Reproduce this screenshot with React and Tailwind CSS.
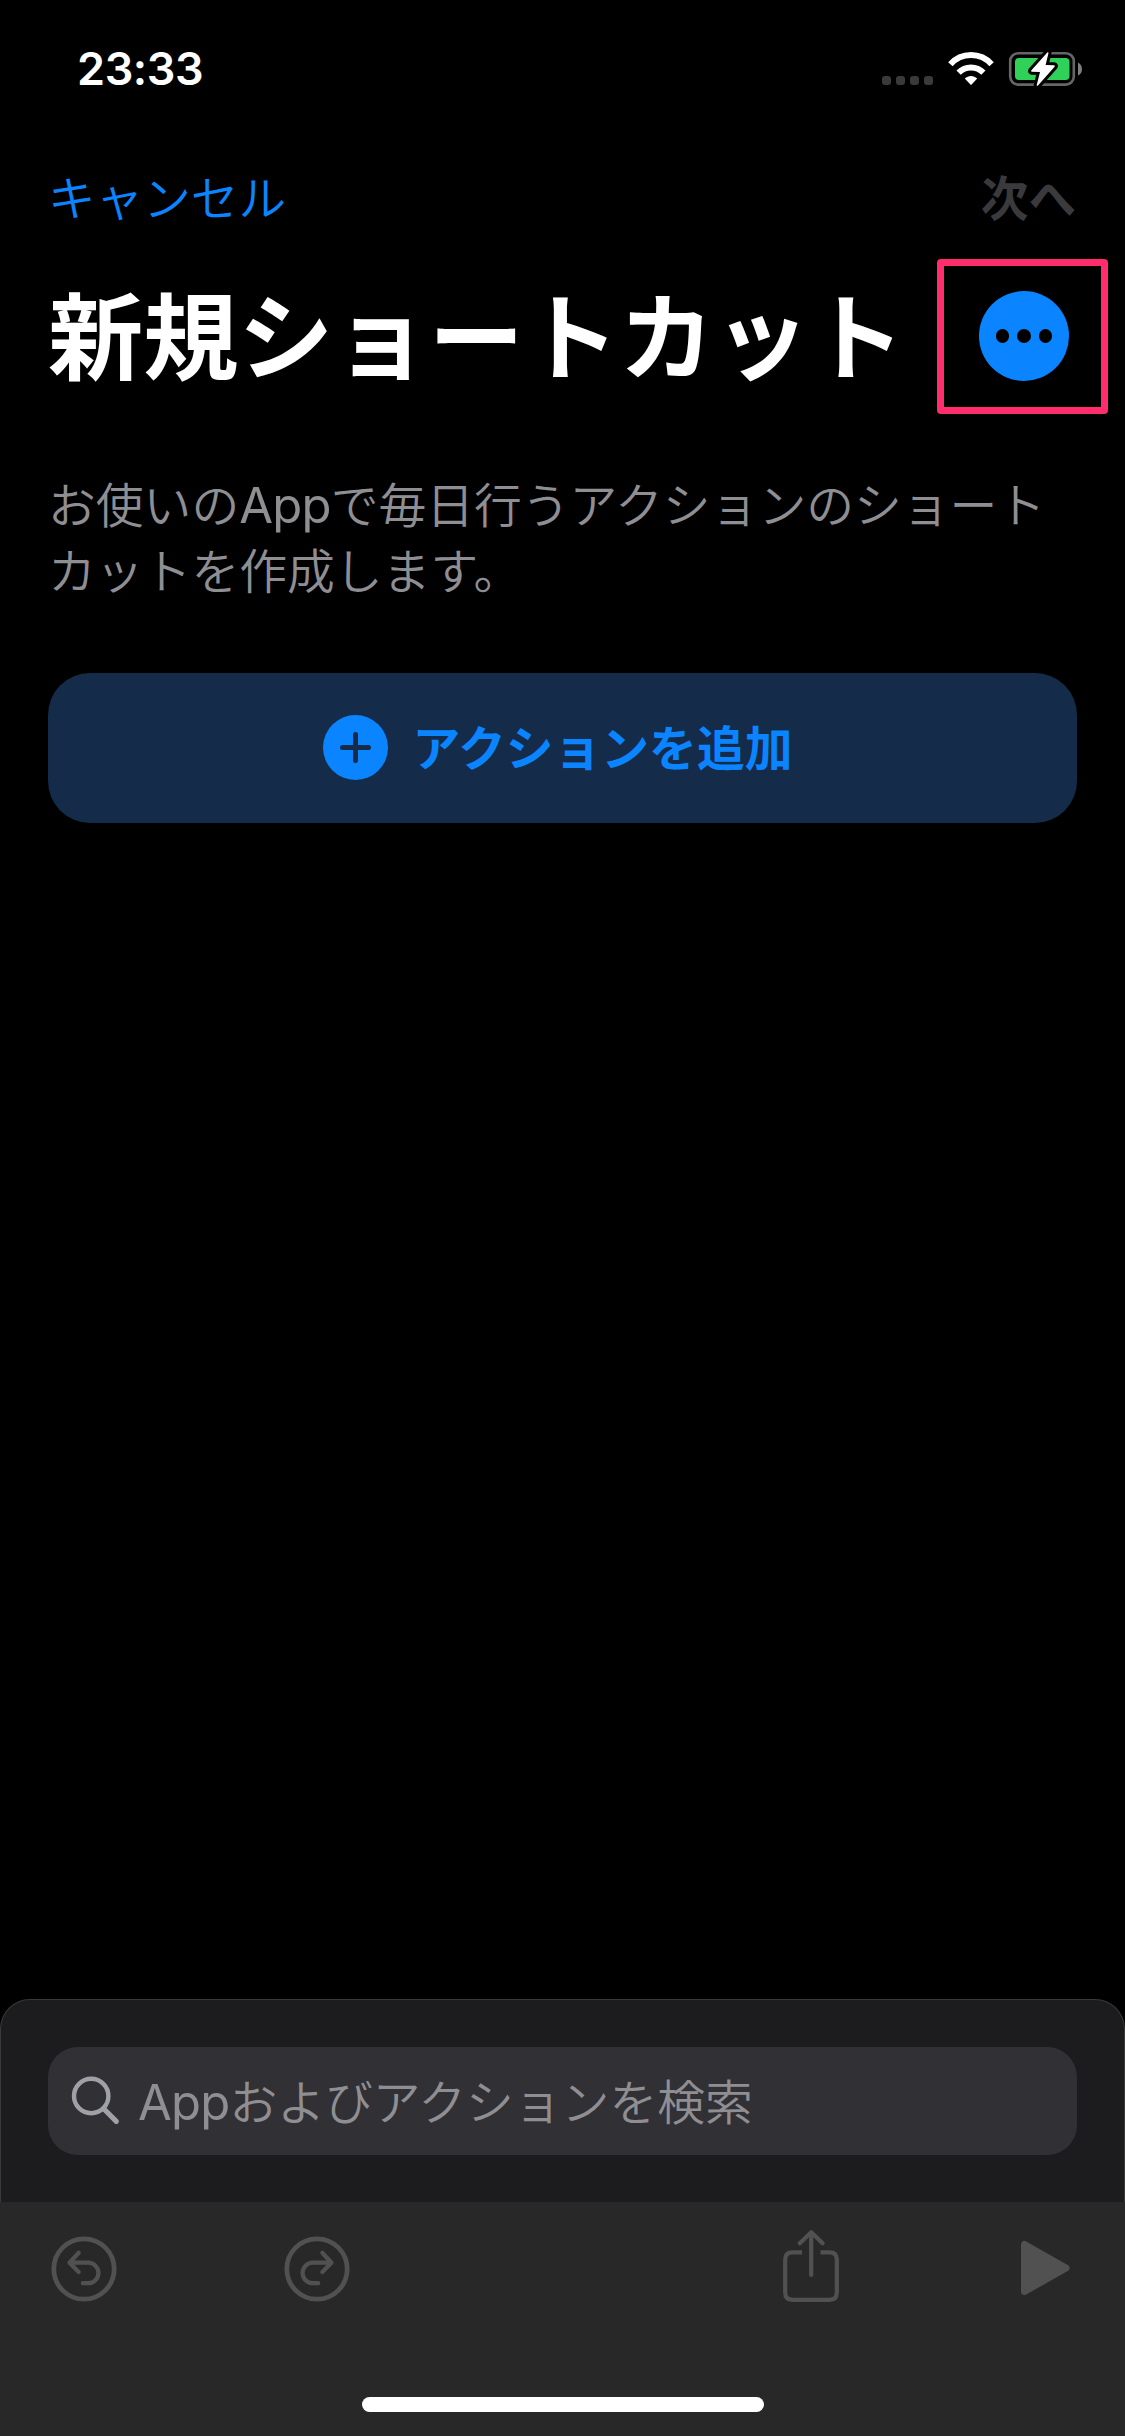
import React from "react";

function StatusIcons() {
  return (
    <svg width="204" height="40" viewBox="880 49 204 40" fill="none">
      <g fill="#3a3a3a">
        <rect x="882" y="76" width="9" height="9" rx="3" />
        <rect x="896" y="76" width="9" height="9" rx="3" />
        <rect x="910" y="76" width="9" height="9" rx="3" />
        <rect x="924" y="76" width="9" height="9" rx="3" />
      </g>
      <g stroke="#fff" strokeWidth="6">
        <path d="M950.4 64.3A27.6 27.6 0 0 1 991.6 64.3" />
        <path d="M958.6 72.6A17.4 17.4 0 0 1 983.4 72.6" />
      </g>
      <path d="M964.8 78.6C968.3 75 973.7 75 977.2 78.6L971.6 84.6Q971 85.2 970.4 84.6Z" fill="#fff" />
      <rect x="1010.2" y="53.2" width="63.6" height="31.4" rx="8" stroke="#666" strokeWidth="2.6" />
      <path d="M1078 62.5C1083.3 65 1083.3 73.500 1078 75.500Z" fill="#808080" />
      <rect x="1015" y="58" width="54.500" height="22" rx="4" fill="#30d158" />
      <path
        d="M1047.300 52.500L1031.200 70.500Q1030.700 71.500 1031.800 71.700L1040 72L1036.700 85.200Q1037 86.200 1038 85.500L1054.600 66.700Q1055.500 65.400 1054 65.200L1045.600 65L1048.500 53Q1048.300 51.800 1047.300 52.500Z"
        fill="#fff"
        stroke="#000"
        strokeWidth="6"
        strokeLinejoin="round"
        paintOrder="stroke"
      />
    </svg>
  );
}

function UndoIcon({ className }) {
  return (
    <svg className={className} width="66" height="66" viewBox="-33 -33 66 66" fill="none" stroke="#515151" strokeLinecap="round" strokeLinejoin="round">
      <circle r="30.200" strokeWidth="4.700" />
      <path d="M-5.300 -16.200L-14.500 -6.300L-5.300 3M-14.300 -6.300H4.200A10.200 10.200 0 0 1 4.200 14.200H-1.200" strokeWidth="4.200" />
    </svg>
  );
}

function ShareIcon() {
  return (
    <svg width="56" height="74" viewBox="783 2229 56 74" fill="none" stroke="#515151" strokeWidth="4.200">
      <path d="M802 2252.300H792.500Q785.200 2252.300 785.200 2259.500V2292.500Q785.200 2299.800 792.500 2299.800H829.500Q836.800 2299.800 836.800 2292.500V2259.500Q836.800 2252.300 829.500 2252.300H820.500" />
      <path d="M799.800 2243.300L811.200 2232.200L822.600 2243.300M811.200 2232.500V2275" strokeLinecap="round" strokeLinejoin="round" />
    </svg>
  );
}

function PlayIcon() {
  return (
    <svg width="49" height="56" viewBox="0 0 49 56" fill="#515151" stroke="#515151" strokeWidth="7" strokeLinejoin="round">
      <path d="M3.500 4.500V51.500L45 28Z" />
    </svg>
  );
}

export default function App() {
  return (
    <div
      lang="ja"
      className="flex h-[2436px] w-[1125px] flex-col overflow-hidden bg-black whitespace-nowrap text-white [font-family:'Noto_Sans_CJK_JP',sans-serif]"
    >
      <header className="flex h-[132px] shrink-0 items-start justify-between pt-[49px] pr-[41px] pl-[77px]">
        <time className="text-[45px] leading-[40px] font-semibold tracking-[-0.4px] [font-family:Inter,sans-serif]">23:33</time>
        <StatusIcons />
      </header>

      <nav className="flex h-[127px] shrink-0 items-center justify-between pr-[49px] pl-[48px] text-[47.600px] leading-[60px]">
        <button className="font-[350] text-[#0a84ff]">キャンセル</button>
        <button className="font-bold text-[#3a3a3c]">次へ</button>
      </nav>

      <div className="flex h-[155px] shrink-0 items-center justify-between pr-[17px] pl-[48px]">
        <h1 className="pb-[10px] text-[95.200px] leading-[110px] font-bold">新規ショートカット</h1>
        <div className="flex h-[155px] w-[171px] items-center justify-center rounded-[4px] border-[7px] border-[#ff2d6b] pl-[3px]">
          <button className="mb-[1px] flex size-[90px] items-center justify-center gap-[8px] rounded-full bg-[#0a84ff]">
            <span className="size-[13.400px] rounded-full bg-black" />
            <span className="size-[13.400px] rounded-full bg-black" />
            <span className="size-[13.400px] rounded-full bg-black" />
          </button>
        </div>
      </div>

      <main className="flex flex-1 flex-col px-[48px] pt-[56px]">
        <p className="text-[47.800px] leading-[66px] font-[350] text-[#8e8e93]">
          お使いの<span className="text-[49px] leading-none font-normal tracking-[-0.8px] [font-family:Inter,sans-serif]">App</span>で毎日行うアクションのショート
          <br />
          カットを作成します。
        </p>
        <button className="mt-[71px] flex h-[150px] items-center justify-center gap-[25px] rounded-[42px] bg-[#142c49] pr-[10px] text-[#0a84ff]">
          <svg className="mb-[1px]" width="65" height="65" viewBox="0 0 65 65">
            <circle cx="32.500" cy="32.500" r="32.500" fill="#0a84ff" />
            <path d="M32.500 19.500V45.500M19.500 32.500H45.500" stroke="#142c49" strokeWidth="5" strokeLinecap="round" />
          </svg>
          <span className="pb-[4px] text-[47.800px] leading-[60px] font-bold">アクションを追加</span>
        </button>
      </main>

      <section className="h-[203px] shrink-0 rounded-t-[30px] border border-b-0 border-[#3a3a3a] bg-[#1c1c1e] px-[47px] pt-[47px]">
        <div className="flex h-[108px] items-center gap-[16px] rounded-[30px] bg-[#313035] pl-[22px]">
          <svg width="52" height="52" viewBox="70 2075 52 52" fill="none" stroke="#a0a0a8" strokeWidth="4.400">
            <circle cx="91.200" cy="2096" r="17.200" />
            <path d="M104 2109L116.300 2121.300" strokeWidth="5.200" strokeLinecap="round" />
          </svg>
          <span className="pb-[3px] text-[47.800px] leading-[60px] font-[350] text-[#8e8e93]">
            <span className="text-[49px] leading-none font-normal tracking-[-0.800px] [font-family:Inter,sans-serif]">App</span>およびアクションを検索
          </span>
        </div>
      </section>

      <footer className="flex h-[234px] shrink-0 flex-col items-center justify-between bg-[#282828] pb-[24px]">
        <div className="flex h-[132px] w-full items-center justify-between pr-[55px] pl-[51px]">
          <div className="flex gap-[167px] pt-[1px]">
            <UndoIcon />
            <UndoIcon className="-scale-x-100" />
          </div>
          <div className="flex items-center gap-[182px]">
            <div className="pb-[4px]">
              <ShareIcon />
            </div>
            <PlayIcon />
          </div>
        </div>
        <div className="h-[15px] w-[402px] rounded-full bg-white" />
      </footer>
    </div>
  );
}
